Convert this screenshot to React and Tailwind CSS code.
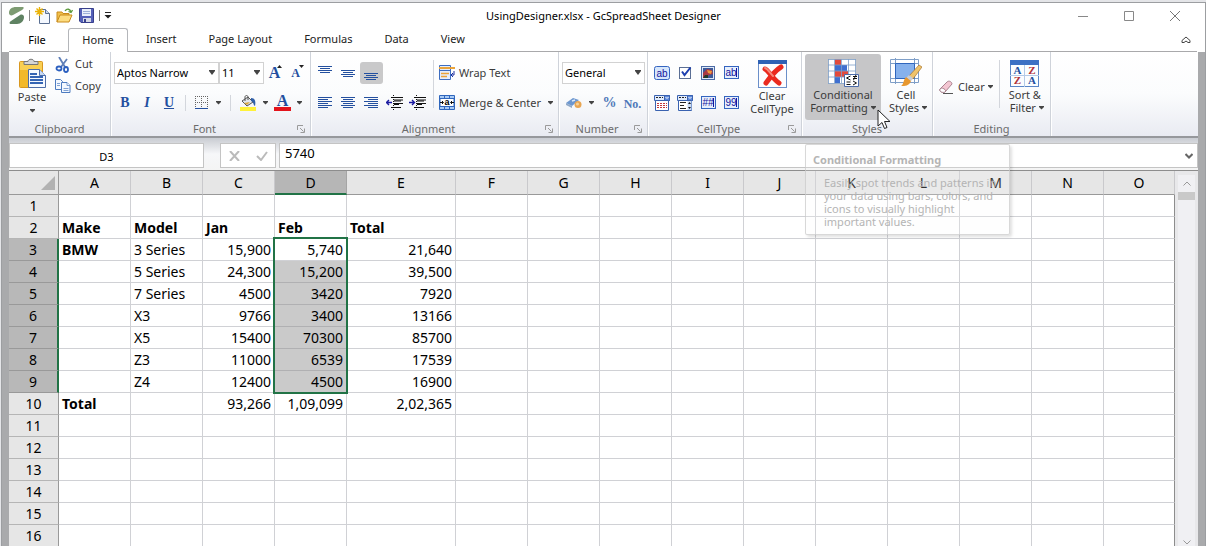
import { useState } from 'react';

const TABS = ['Insert', 'Page Layout', 'Formulas', 'Data', 'View'];
const COLS = ['A', 'B', 'C', 'D', 'E', 'F', 'G', 'H', 'I', 'J', 'K', 'L', 'M', 'N', 'O'];

const ROWS = {
  2: ['Make', 'Model', 'Jan', 'Feb', 'Total'],
  3: ['BMW', '3 Series', '15,900', '5,740', '21,640'],
  4: ['', '5 Series', '24,300', '15,200', '39,500'],
  5: ['', '7 Series', '4500', '3420', '7920'],
  6: ['', 'X3', '9766', '3400', '13166'],
  7: ['', 'X5', '15400', '70300', '85700'],
  8: ['', 'Z3', '11000', '6539', '17539'],
  9: ['', 'Z4', '12400', '4500', '16900'],
  10: ['Total', '', '93,266', '1,09,099', '2,02,365'],
};

function Caret({ className = '' }) {
  return (
    <svg className={`shrink-0 ${className}`} width="5" height="4" viewBox="0 0 5 4">
      <path d="M0 0h5v1L2.500 3.500 0 1z" fill="#444" />
    </svg>
  );
}

function Sep({ className = '' }) {
  return <span className={`w-px bg-[#d3d6dc] shrink-0 ${className}`} />;
}

function Group({ label, launcher, className, children }) {
  return (
    <section className={`relative flex flex-col shrink-0 border-r border-[#cfd3da] shadow-[1px_0_0_#fff] ${className}`}>
      <div className="flex-1 flex">{children}</div>
      <div className={`h-[15px] text-center leading-4 text-[#6b6b6b] ${launcher ? 'pr-3' : ''}`}>{label}</div>
      {launcher && (
        <button type="button" aria-label={`${label} settings`} className="absolute right-[5px] bottom-[3px]">
          <svg width="8" height="8" viewBox="0 0 8 8" fill="none" stroke="#9a9a9a">
            <path d="M.5 5V.5H6M3 3l3.500 3.500M7.500 3.500v4h-4" />
          </svg>
        </button>
      )}
    </section>
  );
}

function IconButton({ label, className = 'w-[23px]', children }) {
  return (
    <button type="button" aria-label={label} title={label} className={`h-[22px] shrink-0 flex items-center justify-center ${className}`}>
      {children}
    </button>
  );
}

function Combo({ label, options, className }) {
  return (
    <div className={`relative h-[22px] shrink-0 ${className}`}>
      <select aria-label={label} className="appearance-none w-full h-full border border-[#d2d2d2] bg-white pl-[2px] pr-4 text-black leading-5 outline-none">
        {options.map(o => <option key={o}>{o}</option>)}
      </select>
      <svg className="absolute right-1 top-2 pointer-events-none" width="6" height="6" viewBox="0 0 6 6">
        <path d="M0 0h6v1L3 5 0 1z" fill="#444" />
      </svg>
    </div>
  );
}

function Lines({ rows }) {
  return (
    <svg width="15" height="14" viewBox="0 0 15 14" fill="#24509f">
      {rows.map(([x, y, w]) => <rect key={y} x={x} y={y} width={w} height="1" />)}
    </svg>
  );
}

function Indent({ flip }) {
  return (
    <svg width="17" height="16" viewBox="0 0 17 16">
      <path d="M5 2.500h12M8 5h9M8 6h7M8 8.500h9M8 9.500h5M5 12.500h10" stroke="#111" />
      <path d="M7.500 0v16" stroke="#111" strokeDasharray="1 1" />
      <path d={flip ? 'M0 7.500h5M3 5l2.500 2.500L3 10' : 'M6 7.500H1M3 5L.5 7.500 3 10'} stroke="#1a1aa0" strokeWidth="1.400" fill="none" />
    </svg>
  );
}

function CellIcon({ type }) {
  const mono = { fontFamily: 'Liberation Sans', fill: '#14149c' };
  if (type === 'button') {
    return (
      <svg width="17" height="14" viewBox="0 0 17 14">
        <rect x=".5" y=".5" width="15" height="13" rx="2" fill="#d6e6fb" stroke="#3565c0" />
        <text x="8" y="11" fontSize="10" textAnchor="middle" {...mono}>ab</text>
      </svg>
    );
  }
  if (type === 'check') {
    return (
      <svg width="13" height="14" viewBox="0 0 13 14">
        <rect x=".5" y="1.500" width="11" height="11" fill="#fff" stroke="#5b6f95" />
        <path d="M3 5.500L5.500 9 11.500 1.500" fill="none" stroke="#1d3fb0" strokeWidth="2" />
      </svg>
    );
  }
  if (type === 'image') {
    return (
      <svg width="15" height="14" viewBox="0 0 15 14">
        <rect x=".5" y=".5" width="13" height="13" fill="#dfe9f8" stroke="#4c6ba5" />
        <path d="M2 2h10v10H2z" fill="#3c5a9a" />
        <path d="M2 7l4-4 5 1 1 4-4 1-2 3H2z" fill="#a83a45" />
        <path d="M6 4l5 1-1 3-3-1z" fill="#ef9a3c" />
        <path d="M4 9h3v3H2z" fill="#223a2a" />
      </svg>
    );
  }
  if (type === 'date' || type === 'list') {
    return (
      <svg width="17" height="16" viewBox="0 0 17 16">
        <path d="M.5.5h15v5H.5z" fill="#dfeafc" stroke="#3a62b0" />
        <path d="M2 2.500h7" stroke="#222" strokeDasharray="2 1" />
        <path d="M10.500.5h5v5h-5z" fill="#5d89dc" stroke="#3a62b0" />
        <path d="M11.500 2l1.500 1.500L14.500 2" fill="none" stroke="#fff" />
        <path d="M1.500 5.500h13v10h-13z" fill="#fff" stroke="#3a62b0" />
        {type === 'date'
          ? <path d="M3 8.500h10M3 10.500h10M3 12.500h10" stroke="#c3393c" strokeDasharray="2 1" />
          : (
            <>
              <path d="M3 7.500h6M3 10.500h4M3 13.500h6" stroke="#222" />
              <path d="M10.500 6h4v9h-4z" fill="#cbdcf6" />
              <path d="M11 9l1.500-2L14 9zM11 12l1.500 2 1.500-2z" fill="#111" />
            </>
          )}
      </svg>
    );
  }
  const text = { text: 'ab', mask: '##', number: '99' }[type];
  return (
    <svg width="15" height="14" viewBox="0 0 15 14">
      <rect x=".5" y=".5" width="14" height="12" fill="#e6effc" stroke="#3565c0" />
      <text x="7" y="10" fontSize="10" textAnchor="middle" {...mono}>{text}</text>
      <path d="M12.500 2v9" stroke="#14149c" />
    </svg>
  );
}

function TitleBar() {
  return (
    <header className="grid grid-cols-[1fr_auto_1fr] items-center h-[25px]">
      <div className="flex items-center pl-[6px]">
        <svg width="17" height="17" viewBox="0 0 17 17">
          <path d="M1 6C1 2 4 0 8 0h7c1 0 1 2-1 3L5 8C3 9 1 8 1 6z" fill="#7d9b72" />
          <path d="M16 10c0 4-3 7-7 7H3c-2 0-2-2 0-3l9-6c2-1 4 0 4 2z" fill="#5f8262" />
        </svg>
        <Sep className="h-[11px] ml-[4px] mr-[5px] !bg-[#888]" />
        <button type="button" aria-label="New" className="mr-[6px]">
          <svg width="15" height="17" viewBox="0 0 15 17">
            <path d="M4.500 2.500h6l4 4v10h-10z" fill="#f4f8ff" stroke="#5a6f92" />
            <path d="M10.500 2.500v4h4" fill="#c5d6f0" stroke="#5a6f92" />
            <path d="M4.500 0v9M0 4.500h9M1.500 1.500l6 6M7.500 1.500l-6 6" stroke="#eab308" strokeWidth="1.400" />
          </svg>
        </button>
        <button type="button" aria-label="Open" className="mr-[6px]">
          <svg width="17" height="15" viewBox="0 0 17 15">
            <path d="M1 14V4h5l1 1.500h6V8" fill="#f0c04c" stroke="#c98a1b" />
            <path d="M1 14l3-7h12l-3 7z" fill="#fcdc80" stroke="#c98a1b" />
            <path d="M9 3c2-3 5-2 6 1M16.500 2L15 4.500 12.500 3.500" fill="none" stroke="#5b9a3c" strokeWidth="1.300" />
          </svg>
        </button>
        <button type="button" aria-label="Save" className="mr-[5px]">
          <svg width="15" height="15" viewBox="0 0 15 15">
            <path d="M.5.5h14v14H2l-1.500-1.500z" fill="#5460b8" stroke="#38408c" />
            <path d="M3 1h9v7H3z" fill="#e9effa" />
            <path d="M4 3.500h7M4 5.500h7" stroke="#9db0d8" />
            <path d="M4 10h8v4H4z" fill="#d5d9e6" />
            <path d="M5 11h2v3H5z" fill="#38408c" />
          </svg>
        </button>
        <Sep className="h-[11px] mr-[4px] !bg-[#777]" />
        <button type="button" aria-label="Customize toolbar">
          <svg width="8" height="7" viewBox="0 0 8 7" fill="#222"><path d="M1 0h6v1H1zM.5 3h7L4 6.500z" /></svg>
        </button>
      </div>
      <h1 className="pt-px text-black">UsingDesigner.xlsx - GcSpreadSheet Designer</h1>
      <div className="flex justify-end pr-[7px]">
        <button type="button" aria-label="Minimize" className="w-[46px] h-6 flex items-center justify-center">
          <svg width="10" height="10" viewBox="0 0 10 10"><path d="M0 5.500h10" stroke="#888" /></svg>
        </button>
        <button type="button" aria-label="Maximize" className="w-[46px] h-6 flex items-center justify-center">
          <svg width="10" height="10" viewBox="0 0 10 10"><path d="M.5.5h9v9h-9z" fill="none" stroke="#888" /></svg>
        </button>
        <button type="button" aria-label="Close" className="w-[46px] h-6 flex items-center justify-center">
          <svg width="10" height="10" viewBox="0 0 10 10"><path d="M0 0l10 10M10 0L0 10" stroke="#777" /></svg>
        </button>
      </div>
    </header>
  );
}

function Ribbon() {
  return (
    <div className="flex h-[86px] bg-gradient-to-b from-white via-[#fbfcfd] to-[#e9ebf2] border-b-2 border-[#96989c]">
      <Group label="Clipboard" className="w-[102px]">
        <button type="button" className="flex flex-col items-center w-[46px] pt-[6px] leading-4">
          <svg width="28" height="31" viewBox="0 0 28 31">
            <rect x="1.500" y="3.500" width="23" height="26" rx="1" fill="#f2b92b" stroke="#d8971f" />
            <path d="M2 4h22v8H2z" fill="#f9cf52" />
            <path d="M6 6.500V3.500h4c0-3 6-3 6 0h4v3z" fill="#d5d5d5" stroke="#777" />
            <path d="M10.500 11.500h11l6 6v12h-17z" fill="#f5f9ff" stroke="#4c6ca8" />
            <path d="M21.500 11.500v6h6" fill="#c9daf3" stroke="#4c6ca8" />
            <path d="M12 16h7M12 19h13M12 22h13M12 25h13" stroke="#3464b4" strokeWidth="2" />
          </svg>
          Paste
          <Caret className="mt-1" />
        </button>
        <div className="flex flex-col gap-[2px] pt-[2px]">
          <button type="button" className="flex items-center gap-1 h-5">
            <svg className="mt-[2px]" width="16" height="16" viewBox="0 0 16 16" fill="none">
              <path d="M4 0l6 10M12 2L6 10" stroke="#5f7fb8" strokeWidth="1.800" />
              <ellipse cx="4" cy="11.500" rx="2.500" ry="2" stroke="#2b5fbf" strokeWidth="1.800" />
              <ellipse cx="11" cy="12.500" rx="2" ry="2.500" stroke="#2b5fbf" strokeWidth="1.800" />
            </svg>
            Cut
          </button>
          <button type="button" className="flex items-center gap-1 h-5">
            <svg width="16" height="14" viewBox="0 0 16 14" fill="#f3f8ff" stroke="#4e7cc0">
              <path d="M.5.5h5l2 2v8h-7z" />
              <path d="M6.500 3.500h5.500l3 3v7H6.500z" />
              <path d="M12 3.500v3h3M2 4.500h3M2 6.500h3M8.500 9.500h5M8.500 11.500h5" strokeWidth=".7" />
            </svg>
            Copy
          </button>
        </div>
      </Group>

      <Group label="Font" launcher className="w-[200px]">
        <div className="flex flex-col gap-2 pt-[10px] pl-[3px]">
          <div className="flex items-center">
            <Combo label="Font family" options={['Aptos Narrow', 'Arial']} className="w-[105px]" />
            <Combo label="Font size" options={['11', '12', '14']} className="w-[45px]" />
            <IconButton label="Grow font">
              <span className="font-['Liberation_Serif',serif] text-base font-bold text-[#234f9f]">A</span>
              <svg className="mb-3 -ml-[3px]" width="5" height="4" viewBox="0 0 5 4"><path d="M0 3l2.500-3L5 3z" fill="#222" /></svg>
            </IconButton>
            <IconButton label="Shrink font" className="w-[21px]">
              <span className="font-['Liberation_Serif',serif] text-xs leading-6 font-bold text-[#234f9f]">A</span>
              <svg className="mb-3 -ml-px" width="5" height="4" viewBox="0 0 5 4"><path d="M0 0h5L2.500 3z" fill="#222" /></svg>
            </IconButton>
          </div>
          <div className="flex items-center font-['Liberation_Serif',serif] text-sm font-bold text-[#234f9f]">
            <IconButton label="Bold" className="w-[22px]">B</IconButton>
            <IconButton label="Italic" className="w-[22px]"><i>I</i></IconButton>
            <IconButton label="Underline" className="w-[22px]"><u>U</u></IconButton>
            <Sep className="h-4 mx-[5px]" />
            <IconButton label="Borders" className="w-[34px] gap-[7px]">
              <svg width="14" height="14" viewBox="0 0 14 14"><path d="M.5 0v12M6.500 0v12M12.500 0v12M0 .5h13M0 6.500h13" stroke="#666" strokeDasharray="1 1" /><path d="M0 12.500h13" stroke="#234f9f" /></svg>
              <Caret />
            </IconButton>
            <Sep className="h-4 ml-[5px] mr-[6px]" />
            <IconButton label="Fill color" className="w-[34px] gap-[6px]">
              <svg width="17" height="16" viewBox="0 0 17 16">
                <path d="M0 12h16v4H0z" fill="#fff23a" />
                <path d="M2 6l6-4 5 5-6 4z" fill="#e2e6ec" stroke="#555" />
                <path d="M5 6V2c0-2 3-2 3 0v3" fill="none" stroke="#555" />
                <path d="M11 3c4 0 5 3 4 8-2-1-1-4-4-5z" fill="#2f5fa8" />
                <path d="M4 8l6-1-3 3z" fill="#d8a53c" />
              </svg>
              <Caret />
            </IconButton>
            <IconButton label="Font color" className="w-[34px] gap-[6px]">
              <span className="w-[17px] text-base leading-3 border-b-4 border-[#e3131b]">A</span>
              <Caret />
            </IconButton>
          </div>
        </div>
      </Group>

      <Group label="Alignment" launcher className="w-[248px]">
        <div className="flex flex-col gap-2 pt-[10px] pl-[3px]">
          <div className="flex items-center">
            <IconButton label="Top align"><Lines rows={[[0, 0, 14], [2, 2, 10], [0, 4, 14], [2, 6, 10]]} /></IconButton>
            <IconButton label="Middle align"><Lines rows={[[0, 4, 14], [2, 6, 10], [0, 8, 14], [2, 10, 10]]} /></IconButton>
            <IconButton label="Bottom align" className="w-[23px] rounded-[3px] bg-[#c9c9ca]"><Lines rows={[[0, 7, 14], [2, 9, 10], [0, 11, 14], [2, 13, 10]]} /></IconButton>
          </div>
          <div className="flex items-center">
            <IconButton label="Align left"><Lines rows={[[0, 1, 14], [0, 3, 10], [0, 5, 14], [0, 7, 10], [0, 9, 14], [0, 11, 10]]} /></IconButton>
            <IconButton label="Center"><Lines rows={[[0, 1, 14], [2, 3, 10], [0, 5, 14], [2, 7, 10], [0, 9, 14], [2, 11, 10]]} /></IconButton>
            <IconButton label="Align right"><Lines rows={[[0, 1, 14], [4, 3, 10], [0, 5, 14], [4, 7, 10], [0, 9, 14], [4, 11, 10]]} /></IconButton>
            <IconButton label="Decrease indent"><Indent /></IconButton>
            <IconButton label="Increase indent"><Indent flip /></IconButton>
          </div>
        </div>
        <Sep className="h-12 mt-2 ml-1 mr-[5px]" />
        <div className="flex flex-col gap-2 pt-[10px]">
          <button type="button" className="flex items-center gap-1 h-[22px]">
            <svg width="16" height="16" viewBox="0 0 16 16">
              <path d="M.5.5h11v14H.5z" fill="#e4eefc" stroke="#3d6dc0" />
              <path d="M0 3h16" stroke="#e9a33a" strokeWidth="2" />
              <path d="M0 5.500h12" stroke="#3d6dc0" />
              <path d="M2 8.500h8M2 11.500h6" stroke="#e9a33a" strokeWidth="1.500" />
              <path d="M15 6v4h-2M14 8l-2 2 2 2" fill="none" stroke="#1a2fa0" />
            </svg>
            Wrap Text
          </button>
          <button type="button" className="flex items-center gap-1 h-[22px]">
            <svg width="16" height="16" viewBox="0 0 16 16">
              <path d="M.5.5h15v14H.5zM5.500.5V3M10.500.5V3M5.500 12v2.500M10.500 12v2.500" fill="#a9cbf5" stroke="#2f66bd" />
              <path d="M1 3.500h14v8H1z" fill="#fff" stroke="#2f66bd" />
              <path d="M1 7.500h3M12 7.500h3M3 6l1.500 1.500L3 9M13 6l-1.500 1.500L13 9" fill="none" stroke="#111" />
              <text x="8" y="10" fontSize="9" fontWeight="bold" textAnchor="middle" fontFamily="Liberation Sans">a</text>
            </svg>
            Merge &amp; Center
            <Caret className="ml-[3px]" />
          </button>
        </div>
      </Group>

      <Group label="Number" launcher className="w-[89px]">
        <div className="flex flex-col gap-2 pt-[10px] pl-[3px]">
          <Combo label="Number format" options={['General', 'Number', 'Currency']} className="w-[83px]" />
          <div className="flex items-center">
            <IconButton label="Currency" className="w-[36px] gap-[7px]">
              <svg width="16" height="12" viewBox="0 0 16 12">
                <path d="M0 6l7-5 6 2-7 6z" fill="#6d97cf" />
                <path d="M0 6v2l6 3V9z" fill="#8fa8c8" />
                <path d="M6 4l3-1" stroke="#dbe8f8" strokeWidth="1.500" />
                <circle cx="12" cy="7.500" r="3.500" fill="#e8a552" /><circle cx="11.500" cy="7" r="1.500" fill="#f7d39a" />
              </svg>
              <Caret />
            </IconButton>
            <IconButton label="Percent"><span className="font-['Liberation_Serif',serif] text-sm font-bold text-[#4f77b8]">%</span></IconButton>
            <IconButton label="Number style"><span className="pt-px font-['Liberation_Serif',serif] text-xs font-bold text-[#4f77b8]">No.</span></IconButton>
          </div>
        </div>
      </Group>

      <Group label="CellType" launcher className="w-[154px]">
        <div className="grid grid-cols-[repeat(4,23px)] gap-y-2 content-start pt-[10px] pl-[3px]">
          <IconButton label="Button cell"><CellIcon type="button" /></IconButton>
          <IconButton label="Checkbox cell"><CellIcon type="check" /></IconButton>
          <IconButton label="Image cell"><CellIcon type="image" /></IconButton>
          <IconButton label="Text cell"><CellIcon type="text" /></IconButton>
          <IconButton label="Date cell"><CellIcon type="date" /></IconButton>
          <IconButton label="Combo cell"><CellIcon type="list" /></IconButton>
          <IconButton label="Mask cell"><CellIcon type="mask" /></IconButton>
          <IconButton label="Number cell"><CellIcon type="number" /></IconButton>
        </div>
        <button type="button" className="flex flex-col items-center flex-1 pt-2 leading-[13px]">
          <svg className="mb-px shrink-0" width="29" height="28" viewBox="0 0 29 28">
            <rect x=".5" y=".5" width="28" height="27" fill="#fdfdff" stroke="#6b8fc9" />
            <path d="M0 0h29v4H0z" fill="#2f62b5" />
            <path d="M7 9c4 2 7 9 14 14M23 7C18 10 13 16 8 23" stroke="#ea2a1f" strokeWidth="5" strokeLinecap="round" fill="none" />
            <path d="M7 8c3 1 5 5 8 8" stroke="#f7887a" strokeWidth="2" strokeLinecap="round" fill="none" />
          </svg>
          Clear<br />CellType
        </button>
      </Group>

      <Group label="Styles" className="w-[131px]">
        <button type="button" className="relative flex flex-col items-center w-[76px] h-[66px] mt-[2px] ml-[3px] pt-1 leading-[13px] rounded-[3px] bg-[#c6c6c8]">
          <svg className="ml-px shrink-0" width="32" height="30" viewBox="0 0 32 30">
            <path d="M.5 1.500h27v24H.5z" fill="#fff" />
            <path d="M7 1h6v6H7zM7 13h13v6H7z" fill="#e34a3c" />
            <path d="M7 7h12v6H7zM7 19h5v6H7z" fill="#3f6fd0" />
            <path d="M.5 1v24.500M6.500 1v24M13.500 1v24M20.500 1v24M27.500 1v24M0 1.500h28M0 7h28M0 13h28M0 19h28M0 25.500h28" stroke="#7f9fc8" strokeWidth=".8" />
            <path d="M16.500 16.500h14v12h-14z" fill="#fff" stroke="#4c6ca8" />
            <path d="M22.500 18l-4 2 4 2M18.500 24h4M18.500 26.500h4M25 18.500h4M25 20.500h4M28 17l-2.500 5M25 23l3.500 2-3.500 2" fill="none" stroke="#111" />
          </svg>
          <span>Conditional</span>
          <span className="flex items-center gap-[3px]">Formatting <Caret /></span>
          <svg className="absolute left-[72px] top-[55px] z-20" width="14" height="21" viewBox="0 0 14 21">
            <path d="M1 1v16l4-3.500 2.500 6 2.500-1-2.500-6H13z" fill="#fff" stroke="#222" />
          </svg>
        </button>
        <button type="button" className="flex flex-col items-center flex-1 pr-px pt-[6px] leading-[13px]">
          <svg className="shrink-0" width="32" height="30" viewBox="0 0 32 30">
            <path d="M.5 1.500h28v23H.5z" fill="#fff" stroke="#7f9fc8" />
            <path d="M5.500 0v26M24.500 0v26M0 5.500h29M0 20.500h29" stroke="#7f9fc8" />
            <path d="M5.500 5.500h19v15h-19z" fill="#86b1ec" stroke="#2f66bd" />
            <path d="M29 7l3 2-9 12-4-3z" fill="#efc36a" stroke="#a8742c" strokeWidth=".7" />
            <path d="M19 17l4 3-2 3-5-3z" fill="#c8ccd4" />
            <path d="M16 19l5 4c-2 5-6 5-10 5 3-2 2-6 5-9z" fill="#e8982f" />
          </svg>
          <span>Cell</span>
          <span className="flex items-center gap-[3px] pl-1">Styles <Caret /></span>
        </button>
      </Group>

      <Group label="Editing" className="w-[118px]">
        <button type="button" className="flex items-center h-[22px] mt-6 ml-[6px]">
          <svg className="mr-[5px]" width="14" height="14" viewBox="0 0 14 14">
            <path d="M1 9l7-7c2-2 5 0 5 2l-7 8c-2 1-6 0-5-3z" fill="#f3c6d2" stroke="#a9838f" />
            <path d="M1 9l1-1c2 0 4 1 5 3l-1 1c-2 1-6 0-5-3z" fill="#fff" stroke="#a9838f" />
            <path d="M4 13.500h10" stroke="#555" />
          </svg>
          Clear
          <Caret className="ml-[3px]" />
        </button>
        <Sep className="h-12 mt-2 ml-[6px]" />
        <button type="button" className="flex flex-col items-center flex-1 pt-2 leading-[13px]">
          <svg className="shrink-0" width="29" height="28" viewBox="0 0 29 28">
            <rect x=".5" y=".5" width="28" height="26" fill="#fbfdff" stroke="#5a86c8" />
            <path d="M0 0h29v5H0z" fill="#3c70c4" />
            <path d="M14.500 5v22M0 15.500h29" stroke="#b4cbe8" />
            <g fontFamily="Liberation Serif" fontSize="11" fontWeight="bold" textAnchor="middle">
              <text x="7.500" y="14" fill="#234f9f">A</text><text x="22" y="14" fill="#b03038">Z</text>
              <text x="7.500" y="24" fill="#b03038">Z</text><text x="22" y="24" fill="#234f9f">A</text>
            </g>
          </svg>
          <span>Sort &amp;</span>
          <span className="flex items-center gap-[3px] pl-1">Filter <Caret /></span>
        </button>
      </Group>
    </div>
  );
}

function FormulaBar() {
  const [value, setValue] = useState('5740');
  return (
    <div className="relative flex h-[33px] pt-[5px] pb-[2px] bg-gradient-to-b from-[#c9ccd2] via-[#f6f7f9] to-[#f4f4f4] border-b border-[#8d8d8d]">
      <input aria-label="Name box" defaultValue="D3" className="w-[195px] pt-[3px] border border-[#c4c4c4] bg-white text-center text-black outline-none" />
      <div className="flex w-[56px] ml-4 border border-[#c4c4c4] bg-white">
        <button type="button" aria-label="Cancel" className="flex-1 flex items-center justify-center">
          <svg width="11" height="10" viewBox="0 0 11 10"><path d="M1 0l9 10M10 0L1 10" stroke="#bbb" strokeWidth="2" /></svg>
        </button>
        <button type="button" aria-label="Enter" className="flex-1 flex items-center justify-center">
          <svg width="12" height="10" viewBox="0 0 12 10"><path d="M1 5l4 4 6-8" fill="none" stroke="#bbb" strokeWidth="2" /></svg>
        </button>
      </div>
      <div className="flex flex-1 ml-[3px] border border-[#c4c4c4] bg-white">
        <input aria-label="Formula" value={value} onChange={e => setValue(e.target.value)}
          className="flex-1 min-w-0 pl-[5px] pb-1 text-[13px] text-black outline-none" />
        <button type="button" aria-label="Expand formula bar" className="w-4 flex items-center justify-center">
          <svg width="8" height="6" viewBox="0 0 8 6"><path d="M.5 1L4 4.500 7.500 1" fill="none" stroke="#666" strokeWidth="2" /></svg>
        </button>
      </div>

      <div role="tooltip" className="absolute left-[796px] top-[6px] z-10 w-[205px] h-[91px] pt-2 pl-[7px] rounded-[2px] border border-[#c8c8c8]/70 bg-[#fafafc]/20 shadow-[2px_2px_3px_rgba(0,0,0,0.12)] leading-[13px] whitespace-nowrap text-[#b4b4b4]">
        <p className="font-bold">Conditional Formatting</p>
        <p className="mt-[10px] pl-[11px]">
          Easily spot trends and patterns in<br />
          your data using bars, colors, and<br />
          icons to visually highlight<br />
          important values.
        </p>
      </div>
    </div>
  );
}

function Sheet() {
  return (
    <table className="flex-1 w-full table-fixed border-separate border-spacing-0 bg-white text-sm leading-5 text-black">
      <colgroup>
        <col className="w-[50px]" />
        {COLS.map(c => <col key={c} className={c === 'E' ? 'w-[109px]' : c === 'O' ? '' : 'w-[72px]'} />)}
      </colgroup>
      <thead>
        <tr className="h-6 bg-[#e6e6e6]">
          <th aria-label="Select all" className="p-0 border-r border-b border-[#999]">
            <svg className="ml-auto mr-[3px]" width="14" height="14" viewBox="0 0 14 14"><path d="M14 0v14H0z" fill="#b2b2b2" /></svg>
          </th>
          {COLS.map(c => (
            <th key={c} className={`p-0 pt-px font-normal border-r ${c === 'D' ? 'bg-[#b6b6b6] border-r-[#a5a5a5] border-b-2 border-b-[#217346]' : 'border-r-[#c9c9cc] border-b border-b-[#999]'}`}>{c}</th>
          ))}
        </tr>
      </thead>
      <tbody>
        {Array.from({ length: 16 }, (_, i) => i + 1).map(n => {
          const inSelection = n >= 3 && n <= 9;
          return (
            <tr key={n} className="h-[22px]">
              <th className={`p-0 font-normal border-b ${inSelection ? 'bg-[#b8b8b8] border-b-[#999] border-r-2 border-r-[#217346]' : 'bg-[#e6e6e6] border-b-[#b5b5b5] border-r border-r-[#999]'}`}>{n}</th>
              {COLS.map((c, i) => {
                const bold = n === 2 || i === 0;
                const right = n > 2 && i > 1;
                const last = c === 'O';
                return (
                  <td key={c} className={`relative py-0 px-[3px] border-r border-b border-b-[#d0d1d5] ${last ? 'border-r-[#8d8d8d]' : 'border-r-[#d0d1d5]'} ${bold ? 'font-bold' : ''} ${right ? 'text-right' : ''} ${c === 'D' && n > 3 && inSelection ? 'bg-[#cacaca] !border-b-[#b0b0b2]' : ''}`}>
                    {ROWS[n]?.[i]}
                    {c === 'D' && n === 3 && (
                      <span className="absolute z-[5] -left-[2px] -right-[2px] -top-[2px] h-[157px] border-2 border-[#217346] pointer-events-none" />
                    )}
                  </td>
                );
              })}
            </tr>
          );
        })}
      </tbody>
    </table>
  );
}

export default function App() {
  return (
    <div className="min-h-screen flex flex-col pt-[2px] pl-px bg-[#e4e5e8] font-['Noto_Sans','Segoe_UI',sans-serif] text-[11px] text-[#3b3b3b]">
      <div className="flex-1 flex flex-col border border-b-0 border-[#9c9ea1] bg-white">
        <TitleBar />
        <nav className="flex items-stretch h-6 pl-[7px] pr-2 text-[#222]">
          <button type="button" className="w-14 pt-[2px] border-b border-[#a9a9ab] text-black">File</button>
          <span className="w-[3px] border-b border-[#a9a9ab]" />
          <button type="button" className="w-[60px] border border-b-0 border-[#b4b6ba] rounded-t-[3px]">Home</button>
          <span className="w-[2px] border-b border-[#a9a9ab]" />
          {TABS.map(t => <button key={t} type="button" className="px-4 border-b border-[#a9a9ab]">{t}</button>)}
          <div className="flex-1 flex items-center justify-end pr-[6px] border-b border-[#a9a9ab]">
            <button type="button" aria-label="Collapse ribbon">
              <svg width="10" height="8" viewBox="0 0 10 8"><path d="M1 4.500L5 1l4 3.500v2H7L5 5 3 6.500H1z" fill="#fff" stroke="#444" /></svg>
            </button>
          </div>
        </nav>
        <main className="flex-1 flex flex-col pl-[7px] pr-[7px] bg-[#a9aaac]">
          <Ribbon />
          <FormulaBar />
          <div className="flex-1 flex bg-white">
            <Sheet />
            <div className="w-[23px] shrink-0 flex flex-col items-center justify-between px-[2px] pt-1 bg-[#e8e8ea]">
              <div className="flex flex-col items-center w-[17px] flex-1 bg-[#f0f0f3]">
                <button type="button" aria-label="Scroll up" className="h-[17px] w-full flex items-center justify-center">
                  <svg width="8" height="5" viewBox="0 0 8 5"><path d="M.5 4.500L4 1l3.500 3.500" fill="none" stroke="#999" /></svg>
                </button>
                <span className="w-full h-2 bg-[#c9c9c9]" />
                <button type="button" aria-label="Scroll down" className="mt-auto h-[9px] w-full flex items-center justify-center">
                  <svg width="8" height="5" viewBox="0 0 8 5"><path d="M.5.5L4 4 7.500.5" fill="none" stroke="#999" /></svg>
                </button>
              </div>
            </div>
          </div>
        </main>
      </div>
    </div>
  );
}
